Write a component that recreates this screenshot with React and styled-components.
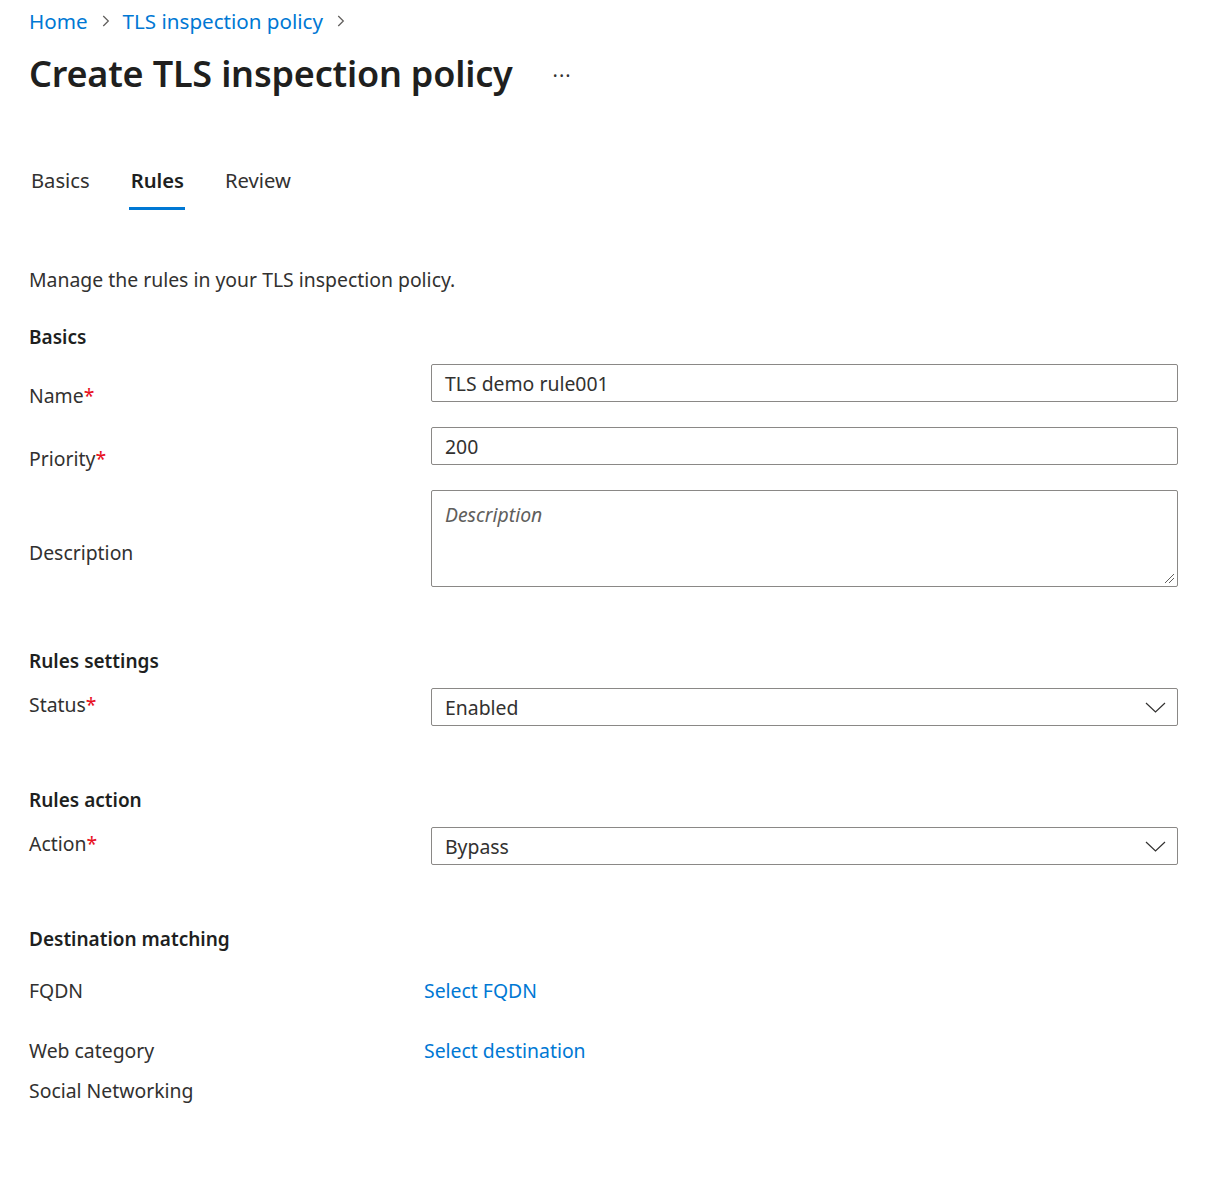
import React from "react";
import styled, { createGlobalStyle } from "styled-components";

const GlobalStyle = createGlobalStyle`
  * { box-sizing: border-box; }
  body {
    margin: 0;
    background: #ffffff;
    font-family: "Noto Sans", "Segoe UI", sans-serif;
    color: #323130;
  }
`;

const Page = styled.main`
  padding: 0 53px 60px 29px;
  font-size: 19.4px;
`;

const Breadcrumb = styled.nav`
  display: flex;
  align-items: center;
  gap: 9px;
  height: 42px;
  padding-top: 0;

  a {
    color: #0078d4;
    text-decoration: none;
    font-size: 20.6px;
  }
`;

const Chevron = () => (
  <svg width="17" height="18" viewBox="0 0 15 16" fill="none">
    <path d="M5.5 3.5 L10 8 L5.5 12.5" stroke="#605e5c" strokeWidth="1.1" />
  </svg>
);

const TitleRow = styled.div`
  display: flex;
  align-items: center;
  gap: 40px;
  height: 62px;

  h1 {
    margin: 0;
    font-size: 36px;
    font-weight: 600;
    color: #201f1e;
    letter-spacing: -0.2px;
  }
`;

const More = styled.span`
  font-size: 20px;
  color: #323130;
  letter-spacing: 1px;
  margin-top: 4px;
`;

const Tabs = styled.div`
  display: flex;
  gap: 41px;
  margin-top: 63px;
  padding-left: 2px;
`;

const Tab = styled.div`
  position: relative;
  font-size: 20.2px;
  padding-bottom: 15px;
  margin-top: -1px;
  font-weight: ${(p) => (p.$active ? 600 : 400)};
  color: ${(p) => (p.$active ? "#201f1e" : "#323130")};

  &::after {
    content: "";
    display: ${(p) => (p.$active ? "block" : "none")};
    position: absolute;
    left: -2px;
    right: -1px;
    bottom: -1px;
    height: 3px;
    background: #0078d4;
  }
`;

const Intro = styled.p`
  margin: 57px 0 0;
`;

const Section = styled.h2`
  margin: ${(p) => p.$top || 30}px 0 0;
  font-size: 19px;
  font-weight: 600;
  color: #201f1e;
`;

const Row = styled.div`
  display: grid;
  grid-template-columns: 402px 1fr;
  align-items: start;
  margin-top: ${(p) => p.$top || 0}px;
`;

const Label = styled.div`
  padding-top: ${(p) => p.$offset || 0}px;
  margin-bottom: ${(p) => -(p.$offset || 0)}px;
  line-height: 26px;

  span {
    color: #e81123;
  }
`;

const Field = styled.div`
  height: ${(p) => p.$h || 38}px;
  border: 1px solid #8a8886;
  border-radius: 2px;
  padding: 0 11px 0 13px;
  display: flex;
  align-items: center;
  justify-content: space-between;
  color: #323130;
`;

const Area = styled(Field)`
  position: relative;
  align-items: flex-start;
  padding-top: 10px;

  em {
    color: #605e5c;
  }
`;

const Grip = styled.svg`
  position: absolute;
  right: 2px;
  bottom: 2px;
`;

const Link = styled.a`
  color: #0078d4;
  text-decoration: none;
  margin-left: -7px;
  line-height: 26px;
`;

const Plain = styled.div`
  margin-top: ${(p) => p.$top || 0}px;
  line-height: 26px;
`;

const Down = () => (
  <svg width="21" height="22" viewBox="0 0 21 22" fill="none">
    <path d="M1 7 L10.5 16 L20 7" stroke="#323130" strokeWidth="1.2" />
  </svg>
);

const Req = ({ children }) => (
  <>
    {children}
    <span>*</span>
  </>
);

export default function App() {
  return (
    <Page>
      <GlobalStyle />
      <Breadcrumb>
        <a href="#">Home</a>
        <Chevron />
        <a href="#">TLS inspection policy</a>
        <Chevron />
      </Breadcrumb>
      <TitleRow>
        <h1>Create TLS inspection policy</h1>
        <More>···</More>
      </TitleRow>

      <Tabs>
        <Tab>Basics</Tab>
        <Tab $active>Rules</Tab>
        <Tab>Review</Tab>
      </Tabs>

      <Intro>Manage the rules in your TLS inspection policy.</Intro>

      <Section $top={31}>Basics</Section>
      <Row $top={14}>
        <Label $offset={19}>
          <Req>Name</Req>
        </Label>
        <Field>TLS demo rule001</Field>
      </Row>
      <Row $top={25}>
        <Label $offset={19}>
          <Req>Priority</Req>
        </Label>
        <Field>200</Field>
      </Row>
      <Row $top={25}>
        <Label $offset={50}>Description</Label>
        <Area $h={97}>
          <em>Description</em>
          <Grip width="12" height="12" viewBox="0 0 12 12">
            <path d="M2 11 L11 2 M6 11 L11 6" stroke="#605e5c" strokeWidth="1" />
          </Grip>
        </Area>
      </Row>

      <Section $top={61}>Rules settings</Section>
      <Row $top={14}>
        <Label $offset={4}>
          <Req>Status</Req>
        </Label>
        <Field>
          Enabled
          <Down />
        </Field>
      </Row>

      <Section $top={61}>Rules action</Section>
      <Row $top={14}>
        <Label $offset={4}>
          <Req>Action</Req>
        </Label>
        <Field>
          Bypass
          <Down />
        </Field>
      </Row>

      <Section $top={61}>Destination matching</Section>
      <Row $top={26}>
        <Label>FQDN</Label>
        <Link href="#">Select FQDN</Link>
      </Row>
      <Row $top={34}>
        <Label>Web category</Label>
        <Link href="#">Select destination</Link>
      </Row>
      <Plain $top={14}>Social Networking</Plain>
    </Page>
  );
}
